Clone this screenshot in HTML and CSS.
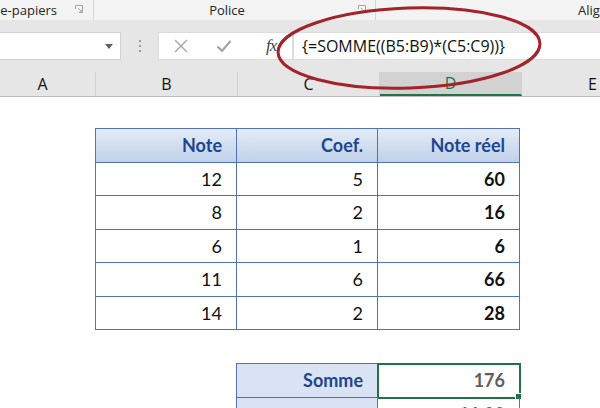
FILE: index.html
```html
<!DOCTYPE html>
<html lang="fr">
<head>
	<meta charset="UTF-8">
	<meta name="viewport" content="width=device-width, initial-scale=1.0">
	<title>Somme des produits</title>
	<link rel="stylesheet" href="styles.css">
</head>
<body>
	<div class="ribbon">
		<div class="group g1">
			<span class="label">Presse-papiers</span>
			<svg class="launcher" width="8" height="8" viewBox="0 0 8 8"><path d="M0.5 4V0.5H7.5V7.5H4" fill="none" stroke="#a6a6a6"/><path d="M3 3L7 7M4.5 7H7V4.5" fill="none" stroke="#a6a6a6"/></svg>
		</div>
		<div class="group g2">
			<span class="label">Police</span>
			<svg class="launcher" width="8" height="8" viewBox="0 0 8 8"><path d="M0.5 4V0.5H7.5V7.5H4" fill="none" stroke="#a6a6a6"/><path d="M3 3L7 7M4.5 7H7V4.5" fill="none" stroke="#a6a6a6"/></svg>
		</div>
		<div class="group g3">
			<span class="label">Alignement</span>
		</div>
	</div>

	<div class="formula-bar">
		<div class="name-box"><span class="arrow"></span></div>
		<div class="dots"><i></i><i></i><i></i></div>
		<div class="buttons">
			<svg class="btn" width="14" height="14" viewBox="0 0 14 14"><path d="M1 1L13 13M13 1L1 13" stroke="#a3a3a3" stroke-width="1.3"/></svg>
			<svg class="btn" width="16" height="14" viewBox="0 0 16 14"><path d="M1.5 7.5L6 12L14.5 2" fill="none" stroke="#a3a3a3" stroke-width="2.2"/></svg>
			<span class="fx">fx</span>
		</div>
		<div class="formula">{=SOMME((B5:B9)*(C5:C9))}</div>
	</div>

	<div class="col-headers">
		<div class="col first">A</div>
		<div class="col">B</div>
		<div class="col">C</div>
		<div class="col active">D</div>
		<div class="col">E</div>
	</div>

	<div class="sheet">
		<div class="grid notes">
			<div class="cell head">Note</div>
			<div class="cell head">Coef.</div>
			<div class="cell head">Note réel</div>

			<div class="cell">12</div><div class="cell">5</div><div class="cell bold">60</div>
			<div class="cell">8</div><div class="cell">2</div><div class="cell bold">16</div>
			<div class="cell">6</div><div class="cell">1</div><div class="cell bold">6</div>
			<div class="cell">11</div><div class="cell">6</div><div class="cell bold">66</div>
			<div class="cell">14</div><div class="cell">2</div><div class="cell bold">28</div>
		</div>

		<div class="grid totals">
			<div class="cell title">Somme</div>
			<div class="cell value selected">176</div>
			<div class="cell title"></div>
			<div class="cell value">11,00</div>
		</div>
	</div>

	<!-- annotation over the formula -->
	<svg class="circle" width="600" height="408" viewBox="0 0 600 408">
		<ellipse cx="409" cy="48" rx="131" ry="40" transform="rotate(-2 409 48)" fill="none" stroke="#a3232b" stroke-width="3"/>
	</svg>
</body>
</html>
```

FILE: styles.css
```css
body {
	margin: 0;
	width: 600px;
	height: 408px;
	overflow: hidden;
	background-color: #fff;
	font-family: "Open Sans", "Noto Sans", sans-serif;
	position: relative;
}

/* ribbon group labels */
.ribbon {
	display: flex;
	height: 20px;
	background-color: #f3f3f3;
	font-size: 13px;
	color: #262626;
	overflow: hidden;
}
.group {
	display: flex;
	align-items: center;
	height: 20px;
	border-right: 1px solid #d6d6d6;
	box-sizing: border-box;
	overflow: hidden;
	white-space: nowrap;
}
.g1 {
	width: 94px;
	justify-content: flex-end;
	padding-right: 10px;
}
.g1 .label { margin-right: 18px; }
.g2 {
	width: 282px;
	padding-right: 9px;
}
.g2 .label {
	flex: 1;
	text-align: center;
	padding-left: 2px;
}
.g3 {
	flex: 1;
	border-right: none;
	padding-left: 202px;
}
.launcher {
	flex-shrink: 0;
	margin-top: -3px;
}

/* formula bar */
.formula-bar {
	display: flex;
	align-items: center;
	height: 52px;
	background-color: #e6e6e6;
}
.name-box {
	width: 121px;
	height: 28px;
	box-sizing: border-box;
	background-color: #fff;
	border: 1px solid #d2d2d2;
	border-left: none;
	display: flex;
	align-items: center;
	justify-content: flex-end;
	padding-right: 7px;
}
.arrow {
	width: 0;
	height: 0;
	border-left: 4px solid transparent;
	border-right: 4px solid transparent;
	border-top: 5px solid #5f5f5f;
}
.dots {
	width: 37px;
	display: flex;
	flex-direction: column;
	align-items: center;
	gap: 3px;
}
.dots i {
	width: 2px;
	height: 2px;
	background-color: #9e9e9e;
}
.buttons {
	width: 135px;
	height: 28px;
	box-sizing: border-box;
	background-color: #fff;
	border: 1px solid #dcdcdc;
	display: flex;
	align-items: center;
	padding-left: 15px;
}
.btn { margin-right: 28px; }
.btn + .btn { margin-right: 34px; }
.fx {
	font-family: "Liberation Serif", serif;
	font-style: italic;
	font-size: 17px;
	color: #444;
	letter-spacing: -1px;
}
.formula {
	flex: 1;
	height: 28px;
	box-sizing: border-box;
	background-color: #fff;
	border: 1px solid #dcdcdc;
	border-right: none;
	padding-left: 8px;
	font-size: 16px;
	line-height: 26px;
	color: #111;
	white-space: nowrap;
}

/* column letters */
.col-headers {
	display: flex;
	height: 25px;
	background-color: #e6e6e6;
	border-bottom: 1px solid #bdbdbd;
	box-sizing: border-box;
}
.col {
	width: 142px;
	flex-shrink: 0;
	border-right: 1px solid #d0d0d0;
	box-sizing: border-box;
	text-align: center;
	font-size: 16px;
	line-height: 24px;
	color: #111;
}
.col.first {
	width: 106px;
	margin-left: -10px;
}
.col.active {
	background-color: #d2d2d2;
	color: #217346;
	border-bottom: 2px solid #217346;
	line-height: 23px;
}

/* sheet */
.sheet {
	padding-top: 31px;
	font-family: Lato, "Liberation Sans", sans-serif;
	font-size: 18px;
}
.grid {
	display: grid;
	grid-auto-rows: 33.5px;
	border-top: 1px solid #5171b9;
	border-left: 1px solid #5171b9;
	box-sizing: border-box;
}
.notes {
	grid-template-columns: 141px 141px 142px;
	width: 425px;
	margin-left: 95px;
}
.totals {
	grid-template-columns: 141px 142px;
	width: 284px;
	margin-left: 236px;
	margin-top: 33px;
}
.cell {
	border-right: 1px solid #5171b9;
	border-bottom: 1px solid #5171b9;
	display: flex;
	align-items: center;
	justify-content: flex-end;
	padding-right: 14px;
	color: #111;
	position: relative;
}
.head {
	background: linear-gradient(#e4ecf7, #bfd1ea);
	color: #1f4591;
	font-weight: bold;
}
.bold { font-weight: bold; }
.title {
	background-color: #dae3f3;
	color: #1f4591;
	font-weight: bold;
}
.value {
	color: #5e5e5e;
	font-weight: bold;
}
.selected {
	outline: 2px solid #217346;
	outline-offset: -1px;
}
.selected::after {
	content: "";
	position: absolute;
	right: -3px;
	bottom: -3px;
	width: 5px;
	height: 5px;
	background-color: #217346;
	border: 1px solid #fff;
}

.circle {
	position: absolute;
	left: 0;
	top: 0;
	pointer-events: none;
}
```
